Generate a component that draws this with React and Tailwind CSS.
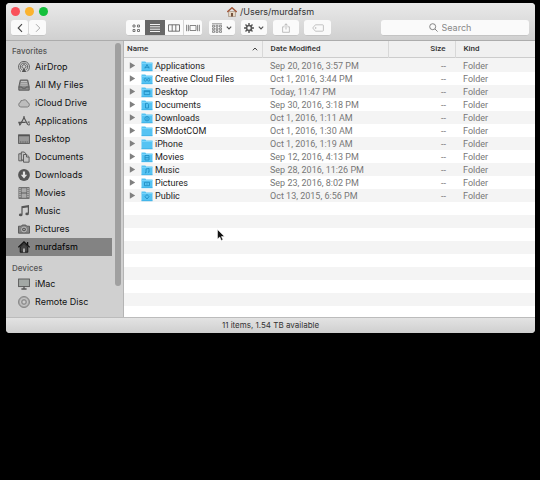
import React from "react";

const favorites = [
  ["AirDrop", "airdrop"],
  ["All My Files", "allfiles"],
  ["iCloud Drive", "cloud"],
  ["Applications", "apps"],
  ["Desktop", "desktop"],
  ["Documents", "documents"],
  ["Downloads", "downloads"],
  ["Movies", "movies"],
  ["Music", "music"],
  ["Pictures", "pictures"],
  ["murdafsm", "home"],
];

const devices = [
  ["iMac", "imac"],
  ["Remote Disc", "disc"],
];

const files = [
  ["Applications", "Sep 20, 2016, 3:57 PM", "apps"],
  ["Creative Cloud Files", "Oct 1, 2016, 3:44 PM", "cc"],
  ["Desktop", "Today, 11:47 PM", "desktop"],
  ["Documents", "Sep 30, 2016, 3:18 PM", "documents"],
  ["Downloads", "Oct 1, 2016, 1:11 AM", "downloads"],
  ["FSMdotCOM", "Oct 1, 2016, 1:30 AM", null],
  ["iPhone", "Oct 1, 2016, 1:19 AM", null],
  ["Movies", "Sep 12, 2016, 4:13 PM", "movies"],
  ["Music", "Sep 28, 2016, 11:26 PM", "music"],
  ["Pictures", "Sep 23, 2016, 8:02 PM", "pictures"],
  ["Public", "Oct 13, 2015, 6:56 PM", "public"],
];

const emptyRows = [0, 1, 2, 3, 4, 5, 6, 7];

const sidebarShapes = {
  airdrop: (
    <g>
      <path d="M3 10.5a5.5 5.5 0 1 1 6 0" />
      <path d="M3.9 8.8a3.7 3.7 0 1 1 4.2 0" />
      <path d="M4.8 7.3a2 2 0 1 1 2.4 0" />
      <path d="M6 6.2 3.8 11h4.4z" fill="currentColor" stroke="none" />
    </g>
  ),
  allfiles: (
    <g>
      <path d="M2.3 1h7.4l1.5 6.8v3.4H.8V7.8z" fill="#8b8b8b" />
      <path d="M3 2.5h6M2.7 4.3h6.6M2.3 6.1h7.4" stroke="#d8d8d8" strokeWidth=".7" />
      <path d="M.8 8h3l.6 1.2h3.2L8.2 8h3" />
    </g>
  ),
  cloud: <path d="M2.8 10a2.4 2.4 0 0 1-.3-4.700 1.800 1.800 0 0 1 2.100-1.900A3.100 3.100 0 0 1 9.500 5.400 2.350 2.350 0 0 1 9.500 10z" fill="#bdbdbd" stroke="#777" />,
  apps: (
    <g>
      <path d="M6.6 1.500 2.200 9.800M5.400 1.500l4.400 8.300" strokeWidth="1.2" />
      <path d="M.3 7.400h7.400M9.700 7.200h2M1 7.500l1 3M10.600 10.500l1-2" strokeWidth="1.2" />
    </g>
  ),
  desktop: (
    <g>
      <rect x=".6" y="1.8" width="10.8" height="8.6" fill="#999" />
      <path d="M.6 2.6h10.8" strokeWidth="1.2" />
      <path d="M2 9h8" strokeDasharray="1 .7" />
    </g>
  ),
  documents: (
    <g fill="#c4c4c4">
      <path d="M.8 2.8h3.4v7H.8z" />
      <path d="M3.3 1h3l1.7 2v6H3.3z" />
      <path d="M5.5 3.5h3.2l2.4 2.3v5.4H5.5z" />
      <path d="M8.5 3.6V6H11" />
    </g>
  ),
  downloads: (
    <g>
      <circle cx="6" cy="6" r="5.9" fill="currentColor" stroke="none" />
      <path d="M6 2.5v4" stroke="#e2e2e2" strokeWidth="2.2" />
      <path d="M2.800 5.800h6.400L6 9.500z" fill="#e2e2e2" stroke="none" />
    </g>
  ),
  movies: (
    <g>
      <rect x="1" y=".7" width="10" height="10.6" fill="#aaa" />
      <path d="M3 1v10M9 1v10M3 6h6" />
      <path d="M2 1v10M10 1v10" stroke="#ddd" strokeDasharray="1 1" strokeWidth=".8" />
    </g>
  ),
  music: (
    <g>
      <path d="M4 9.5V1.800l6.400-1.100v7.800M4 2.700l6.400-1.100" strokeWidth="1.2" />
      <ellipse cx="2.7" cy="9.900" rx="1.8" ry="1.4" fill="currentColor" stroke="none" />
      <ellipse cx="9.1" cy="8.900" rx="1.8" ry="1.4" fill="currentColor" stroke="none" />
    </g>
  ),
  pictures: (
    <g>
      <path d="M.5 3.2h2.8L4.2 2h3.6l.9 1.2h2.8v7H.5z" fill="#828282" />
      <circle cx="6" cy="6.5" r="2.4" stroke="#d6d6d6" fill="#555" strokeWidth=".8" />
      <circle cx="6" cy="6.5" r=".8" fill="#bbb" stroke="none" />
    </g>
  ),
  home: (
    <g>
      <path d="M2.2 6 6 2.4 9.8 6v5.2H2.2z" fill="#444" />
      <path d="M.3 6.4 6 .9l5.7 5.5" strokeWidth="1.3" />
      <path d="M9.6 1v3" strokeWidth="1.3" />
      <path d="M5 7.4h2v3.8H5z" fill="#aaa" stroke="none" />
    </g>
  ),
  imac: (
    <g>
      <rect x=".6" y="1" width="10.8" height="7.6" fill="#a3a8a5" />
      <path d="M6 8.6v2M3.4 11h5.2" strokeWidth="1.3" />
    </g>
  ),
  disc: (
    <g>
      <circle cx="6" cy="6" r="5.5" fill="#aaa" stroke="#777" strokeWidth=".8" />
      <circle cx="6" cy="6" r="3.7" stroke="#d2d2d2" strokeWidth=".7" />
      <circle cx="6" cy="6" r="2.2" fill="#bbb" stroke="#777" strokeWidth=".7" />
      <circle cx="6" cy="6" r=".7" fill="#eee" stroke="none" />
    </g>
  ),
};

const folderMarks = {
  apps: <path d="M4 8.5 6 4.5l2 4M3.5 7.3h5" />,
  cc: <path d="M3.2 6.7c0-2 2-1.8 2.8 0s2.8 1.8 2.8 0-2-1.8-2.8 0-2.8 2-2.8 0z" />,
  desktop: <path d="M3.2 4.8h5.6v3.8H3.2zM3.2 5.6h5.6" />,
  documents: <path d="M4.5 4.3h2l1 1V9h-3z" />,
  downloads: <g><circle cx="6" cy="6.7" r="2.2" /><path d="M6 5.3v2.5" /></g>,
  movies: <path d="M4 4.5V9M8 4.5V9M4 6.7h4M4 4.5h4M4 9h4" />,
  music: <path d="M4 8.8h1V5l3-.6v3.8H7" />,
  pictures: <path d="M3.5 5.3h5v3.4h-5zM5.3 7h1.4" />,
  public: <path d="M6 4.5 8 6.7 6 9 4 6.7z" />,
};

function SidebarIcon({ name }) {
  return (
    <svg viewBox="0 0 12 12" className="size-3 shrink-0" fill="none" stroke="currentColor" strokeWidth=".9" aria-hidden="true">
      {sidebarShapes[name]}
    </svg>
  );
}

function Folder({ mark }) {
  return (
    <svg viewBox="0 0 12 12" className="h-3 w-3 shrink-0" aria-hidden="true">
      <path d="M.5 1.5h3.8l.9 1h6.3V11H.5z" fill="#55c3f3" />
      <path d="M.5 3.5h11" stroke="#83d7fa" strokeWidth=".8" />
      <path d="M.5 10.8h11" stroke="#2fa5dc" strokeWidth=".6" />
      <g fill="none" stroke="#218fc4" strokeWidth=".9">{mark && folderMarks[mark]}</g>
    </svg>
  );
}

function SidebarItem({ label, icon, active }) {
  return (
    <li>
      <a
        href="#"
        aria-current={active ? "page" : undefined}
        className={
          "mr-[11px] flex h-[18px] items-center gap-[5px] pl-3 text-[9px] leading-3 whitespace-nowrap " +
          (active ? "bg-[#838383] text-black" : "text-[#111]")
        }
      >
        <span className={active ? "text-[#111]" : "text-[#555]"}>
          <SidebarIcon name={icon} />
        </span>
        {label}
      </a>
    </li>
  );
}

function ToolButton({ label, className, children }) {
  return (
    <button
      type="button"
      aria-label={label}
      className={"flex h-4 items-center justify-center rounded-[3px] border-b border-[#c4c4c4] bg-[#fafafa] text-[#666] " + className}
    >
      {children}
    </button>
  );
}

function Chevron() {
  return (
    <svg viewBox="0 0 6 4" className="h-1 w-1.5" fill="none" stroke="#555" strokeWidth="1.2" aria-hidden="true">
      <path d="m.8.7 2.2 2.2L5.2.7" />
    </svg>
  );
}

function Toolbar() {
  return (
    <div className="flex h-[18px] items-start pl-[5px]">
      <div className="flex gap-px">
        <ToolButton label="Back" className="w-[17px]">
          <svg viewBox="0 0 6 10" className="h-2.5 w-1.5" fill="none" stroke="#444" strokeWidth="1.1"><path d="M5 1.2 1.2 5 5 8.8" /></svg>
        </ToolButton>
        <ToolButton label="Forward" className="w-[17px]">
          <svg viewBox="0 0 6 10" className="h-2.5 w-1.5" fill="none" stroke="#aaa" strokeWidth="1"><path d="M1 1.2 4.8 5 1 8.8" /></svg>
        </ToolButton>
      </div>
      <div className="ml-20 flex h-4 shrink-0 overflow-hidden rounded-[3px] border-b border-[#c4c4c4] bg-[#fafafa]">
        <button type="button" aria-label="Icon view" className="flex w-[19px] items-center justify-center">
          <svg viewBox="0 0 8 8" className="size-2" fill="none" stroke="#666" strokeWidth=".9">
            <path d="M1 1h2v2H1zM5.5 1h2v2h-2zM1 5.5h2v2H1zM5.5 5.5h2v2h-2z" />
          </svg>
        </button>
        <button type="button" aria-label="List view" aria-pressed="true" className="flex w-5 items-center justify-center bg-[#676767]">
          <svg viewBox="0 0 10 8" className="h-2 w-2.5" stroke="#f2f2f2" strokeWidth="1">
            <path d="M0 .5h10M0 2.8h10M0 5.2h10M0 7.5h10" />
          </svg>
        </button>
        <button type="button" aria-label="Column view" className="flex w-[19px] items-center justify-center border-r border-[#d5d5d5]">
          <svg viewBox="0 0 12 8" className="h-2 w-3" fill="none" stroke="#666" strokeWidth=".9">
            <path d="M.5.8h11v6.4H.5zM4.2.8v6.4M7.8.8v6.4" />
          </svg>
        </button>
        <button type="button" aria-label="Cover flow view" className="flex w-[18px] items-center justify-center">
          <svg viewBox="0 0 14 8" className="h-2 w-3.5" fill="none" stroke="#777" strokeWidth=".9">
            <path d="M4 1.5h6v5H4zM.6.8v6.4M2.4.8v6.4M11.6.8v6.4M13.4.8v6.4" />
          </svg>
        </button>
      </div>
      <ToolButton label="Arrange" className="ml-[7px] w-[26px] gap-1">
        <svg viewBox="0 0 10 10" className="size-2.5" fill="none" stroke="#777" strokeWidth=".8">
          <path d="M0 .8h10" />
          <path d="M.5 2.3h2V4h-2zM4 2.3h2V4H4zM7.500 2.300h2V4h-2zM.5 5h2v1.700h-2zM4 5h2v1.700H4zM7.500 5h2v1.700h-2zM.5 7.700h2v1.700h-2zM4 7.700h2v1.700H4zM7.500 7.700h2v1.700h-2z" />
        </svg>
        <Chevron />
      </ToolButton>
      <ToolButton label="Action" className="ml-1.5 w-[26px] gap-1">
        <svg viewBox="0 0 10 10" className="size-2.5" fill="none" stroke="#555">
          <circle cx="5" cy="5" r="2.5" strokeWidth="1.7" />
          <path d="M5 0v2M5 8v2M0 5h2M8 5h2M1.500 1.500l1.400 1.400M7.100 7.100l1.400 1.400M8.500 1.500 7.100 2.900M2.900 7.100 1.500 8.500" strokeWidth="1.4" />
        </svg>
        <Chevron />
      </ToolButton>
      <ToolButton label="Share" className="ml-1.5 w-[26px]">
        <svg viewBox="0 0 8 10" className="h-2.5 w-2" fill="none" stroke="#b0b0b0" strokeWidth=".8">
          <path d="M2.6 3.8h-2v5.500h6.800V3.800h-2M4 6.500V.8M2.300 2.500 4 .8l1.700 1.700" />
        </svg>
      </ToolButton>
      <ToolButton label="Edit Tags" className="ml-[5px] w-[27px]">
        <svg viewBox="0 0 12 8" className="h-2 w-3" fill="none" stroke="#b5b5b5" strokeWidth=".8">
          <path d="M3.4.8h7.200a.8.8 0 0 1 .8.8v4.800a.8.8 0 0 1-.8.8H3.400L.7 4z" />
          <circle cx="3.7" cy="4" r=".5" />
        </svg>
      </ToolButton>
      <label className="mr-1.5 ml-auto flex h-4 w-[148px] items-center justify-center gap-1 rounded-[3px] border-b border-[#c4c4c4] bg-[#fafafa]">
        <svg viewBox="0 0 9 9" className="size-[9px]" fill="none" stroke="#777" strokeWidth=".9" aria-hidden="true">
          <circle cx="3.7" cy="3.7" r="3" /><path d="m6 6 2.600 2.600" />
        </svg>
        <input type="text" aria-label="Search" placeholder="Search" className="h-3 w-10 bg-transparent text-[9px] leading-3 outline-none placeholder:text-[#888]" />
      </label>
    </div>
  );
}

function Sidebar() {
  return (
    <nav aria-label="Places" className="flex w-[118px] shrink-0 border-r border-[#b4b4b4] bg-[#d0d0d0] pb-1.5">
      <div className="-mr-2 min-w-0 flex-1">
        <h2 className="h-[17px] pt-1 pl-1.5 text-[8px] leading-3 font-medium text-[#555]">Favorites</h2>
        <ul>
          {favorites.map(([label, icon]) => (
            <SidebarItem key={label} label={label} icon={icon} active={icon === "home"} />
          ))}
        </ul>
        <h2 className="h-[19px] pt-1.5 pl-1.5 text-[8px] leading-3 font-medium text-[#555]">Devices</h2>
        <ul>
          {devices.map(([label, icon]) => (
            <SidebarItem key={label} label={label} icon={icon} />
          ))}
        </ul>
      </div>
      <div className="mt-0.5 mr-0.5 h-[243px] w-1.5 rounded-full bg-[#a0a0a0]" />
    </nav>
  );
}

function FileTable() {
  return (
    <div className="min-w-0 flex-1 bg-white font-['Roboto','Liberation_Sans',sans-serif]">
      <table className="w-full table-fixed border-collapse text-left whitespace-nowrap">
        <colgroup>
          <col className="w-[138px]" />
          <col className="w-[126px]" />
          <col className="w-[67px]" />
          <col />
        </colgroup>
        <thead className="bg-[#f0f0f0] text-[8px] leading-3 text-[#333]">
          <tr className="h-4 border-b border-[#ccc]">
            <th className="border-r border-[#d8d8d8] p-0 pr-1 pl-[3px] font-medium" aria-sort="ascending">
              <span className="flex items-center justify-between">
                Name
                <svg viewBox="0 0 6 4" className="h-1 w-1.5" fill="none" stroke="#444" strokeWidth="1"><path d="M.8 3.300 3 1l2.200 2.300" /></svg>
              </span>
            </th>
            <th className="border-r border-[#d8d8d8] p-0 pl-2 font-medium">Date Modified</th>
            <th className="border-r border-[#d8d8d8] p-0 pr-[9px] text-right font-medium">Size</th>
            <th className="p-0 pl-2 font-medium">Kind</th>
          </tr>
        </thead>
        <tbody className="text-[9px] leading-3 text-[#777]">
          <tr className="h-0.5 bg-[#f4f4f4]" aria-hidden="true"><td colSpan={4} className="p-0" /></tr>
          {files.map(([name, date, mark]) => (
            <tr key={name} className="h-[13px] even:bg-[#f4f4f4]">
              <td className="p-0 pl-[5px] text-[#222]">
                <span className="flex h-[13px] items-center">
                  <button type="button" aria-label={"Expand " + name} className="mr-[5px] flex">
                    <svg viewBox="0 0 7 7" className="size-[7px]"><path d="M.8.3 6.200 3.500.8 6.700z" fill="#808080" /></svg>
                  </button>
                  <Folder mark={mark} />
                  <span className="ml-0.5">{name}</span>
                </span>
              </td>
              <td className="p-0 pl-2">{date}</td>
              <td className="p-0 pr-[9px] text-right">--</td>
              <td className="p-0 pl-2">Folder</td>
            </tr>
          ))}
          {emptyRows.map((n) => (
            <tr key={n} className="h-[13px] even:bg-[#f4f4f4]" aria-hidden="true"><td colSpan={4} className="p-0" /></tr>
          ))}
        </tbody>
      </table>
    </div>
  );
}

export default function App() {
  return (
    <main className="relative min-h-screen bg-black pt-[3px] pr-[5px] pl-1.5 font-['Inter','Liberation_Sans',sans-serif]">
      <section className="overflow-hidden rounded-[4px] bg-[#d0d0d0]">
        <header className="border-b border-[#acacac] bg-linear-to-b from-[#e9e9e9] to-[#d0d0d0]">
          <div className="flex h-[17px] items-center px-[5px]">
            <div className="flex flex-1 gap-[5px]">
              <button type="button" aria-label="Close" className="size-[9px] rounded-full bg-[#f9505a]" />
              <button type="button" aria-label="Minimize" className="size-[9px] rounded-full bg-[#fbb32f]" />
              <button type="button" aria-label="Zoom" className="size-[9px] rounded-full bg-[#15c03c]" />
            </div>
            <h1 className="flex items-center gap-[3px] text-[9px] leading-3 text-[#333]">
              <svg viewBox="0 0 10 10" className="size-2.5" aria-hidden="true">
                <path d="M1.500 4.500h7v5h-7z" fill="#e5d6c2" stroke="#8a7767" strokeWidth=".5" />
                <path d="M.3 5 5 .8 9.700 5" fill="none" stroke="#a3583a" strokeWidth="1.5" />
                <path d="M4 6h2v3.500H4z" fill="#76543f" />
              </svg>
              /Users/murdafsm
            </h1>
            <div className="flex-1" />
          </div>
          <Toolbar />
          <div className="h-0.5" />
        </header>
        <div className="flex">
          <Sidebar />
          <FileTable />
        </div>
        <footer className="h-4 border-t border-[#bcbcbc] bg-linear-to-b from-[#e3e3e3] to-[#cfcfcf] text-center text-[8px] leading-[14px] text-[#333]">
          11 items, 1.54 TB available
        </footer>
      </section>
      <svg viewBox="0 0 8 12" className="pointer-events-none absolute top-[229px] left-[217px] h-3 w-2" aria-hidden="true">
        <path d="M.5.5V10l2.300-2 1.500 3.500 1.600-.7L4.400 7.500h3z" fill="#111" stroke="#fff" strokeWidth=".5" />
      </svg>
    </main>
  );
}
